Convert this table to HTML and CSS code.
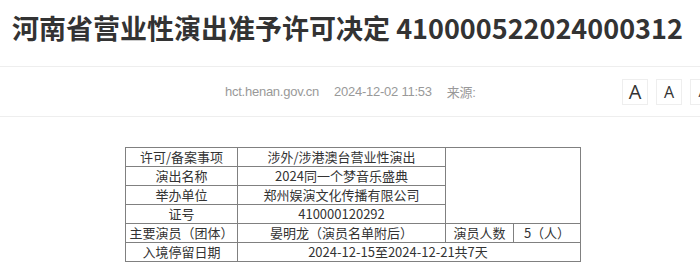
FILE: index.html
```html
<!DOCTYPE html>
<html lang="zh-CN">
<head>
<meta charset="utf-8">
<title>河南省营业性演出准予许可决定</title>
<link rel="stylesheet" href="styles.css">
</head>
<body>
<div class="page">
  <h1 class="title">河南省营业性演出准予许可决定 410000522024000312</h1>
  <div class="meta">
    <span class="meta-item">hct.henan.gov.cn</span>
    <span class="meta-item">2024-12-02 11:53</span>
    <span class="meta-item">来源:</span>
    <div class="tools">
      <span class="font-btn font-lg">A</span>
      <span class="font-btn font-md">A</span>
      <span class="font-btn font-sm">A</span>
    </div>
  </div>
  <div class="content">
    <table class="info">
      <colgroup>
        <col class="c1"><col class="c2"><col class="c3"><col class="c4">
      </colgroup>
      <tr><td>许可/备案事项</td><td>涉外/涉港澳台营业性演出</td><td colspan="2" rowspan="4"></td></tr>
      <tr><td>演出名称</td><td>2024同一个梦音乐盛典</td></tr>
      <tr><td>举办单位</td><td>郑州娱演文化传播有限公司</td></tr>
      <tr><td>证号</td><td>410000120292</td></tr>
      <tr><td>主要演员（团体）</td><td>晏明龙（演员名单附后）</td><td>演员人数</td><td>5（人）</td></tr>
      <tr><td>入境停留日期</td><td colspan="3" class="dates">2024-12-15至2024-12-21共7天</td></tr>
      <tr><td>&nbsp;</td><td>&nbsp;</td><td colspan="2">&nbsp;</td></tr>
    </table>
  </div>
</div>
</body>
</html>
```

FILE: styles.css
```css
html, body {
  margin: 0;
  padding: 0;
  background: #fff;
  overflow: hidden;
}

body {
  font-family: "Noto Sans CJK SC", "Noto Sans", sans-serif;
  color: #333;
}

.page {
  width: 716px;
}

.title {
  margin: 0;
  padding: 9px 12px 19px;
  font-size: 27px;
  line-height: 38px;
  font-weight: bold;
  color: #333;
  white-space: nowrap;
  border-bottom: 1px solid #eeeeee;
}

.meta {
  display: flex;
  align-items: center;
  height: 49px;
  padding-left: 225px;
  border-bottom: 1px solid #eeeeee;
  white-space: nowrap;
  font-family: "Liberation Sans", "Noto Sans CJK SC", sans-serif;
  font-size: 13px;
  letter-spacing: -0.25px;
  color: #999;
}

.meta-item {
  margin-right: 15px;
}

.tools {
  display: flex;
  gap: 8px;
  margin-left: auto;
  letter-spacing: 0;
}

.font-btn {
  display: flex;
  align-items: center;
  justify-content: center;
  width: 24px;
  height: 24px;
  border: 1px solid #eeeeee;
  color: #333;
  font-family: "Open Sans", "Liberation Sans", sans-serif;
}

.font-lg { font-size: 20px; }
.font-md { font-size: 16px; }
.font-sm { font-size: 14px; }

.content {
  padding-top: 30px;
  padding-left: 125px;
}

.info {
  border-collapse: collapse;
  table-layout: fixed;
  width: 455px;
  font-size: 13px;
  color: #333;
}

.c1 { width: 112px; }
.c2 { width: 208px; }
.c3 { width: 68px; }
.c4 { width: 67px; }

.info td {
  border: 1px solid #808080;
  height: 18px;
  padding: 0;
  line-height: 18px;
  text-align: center;
  white-space: nowrap;
}

.info td.dates {
  padding-right: 22px;
}
```
